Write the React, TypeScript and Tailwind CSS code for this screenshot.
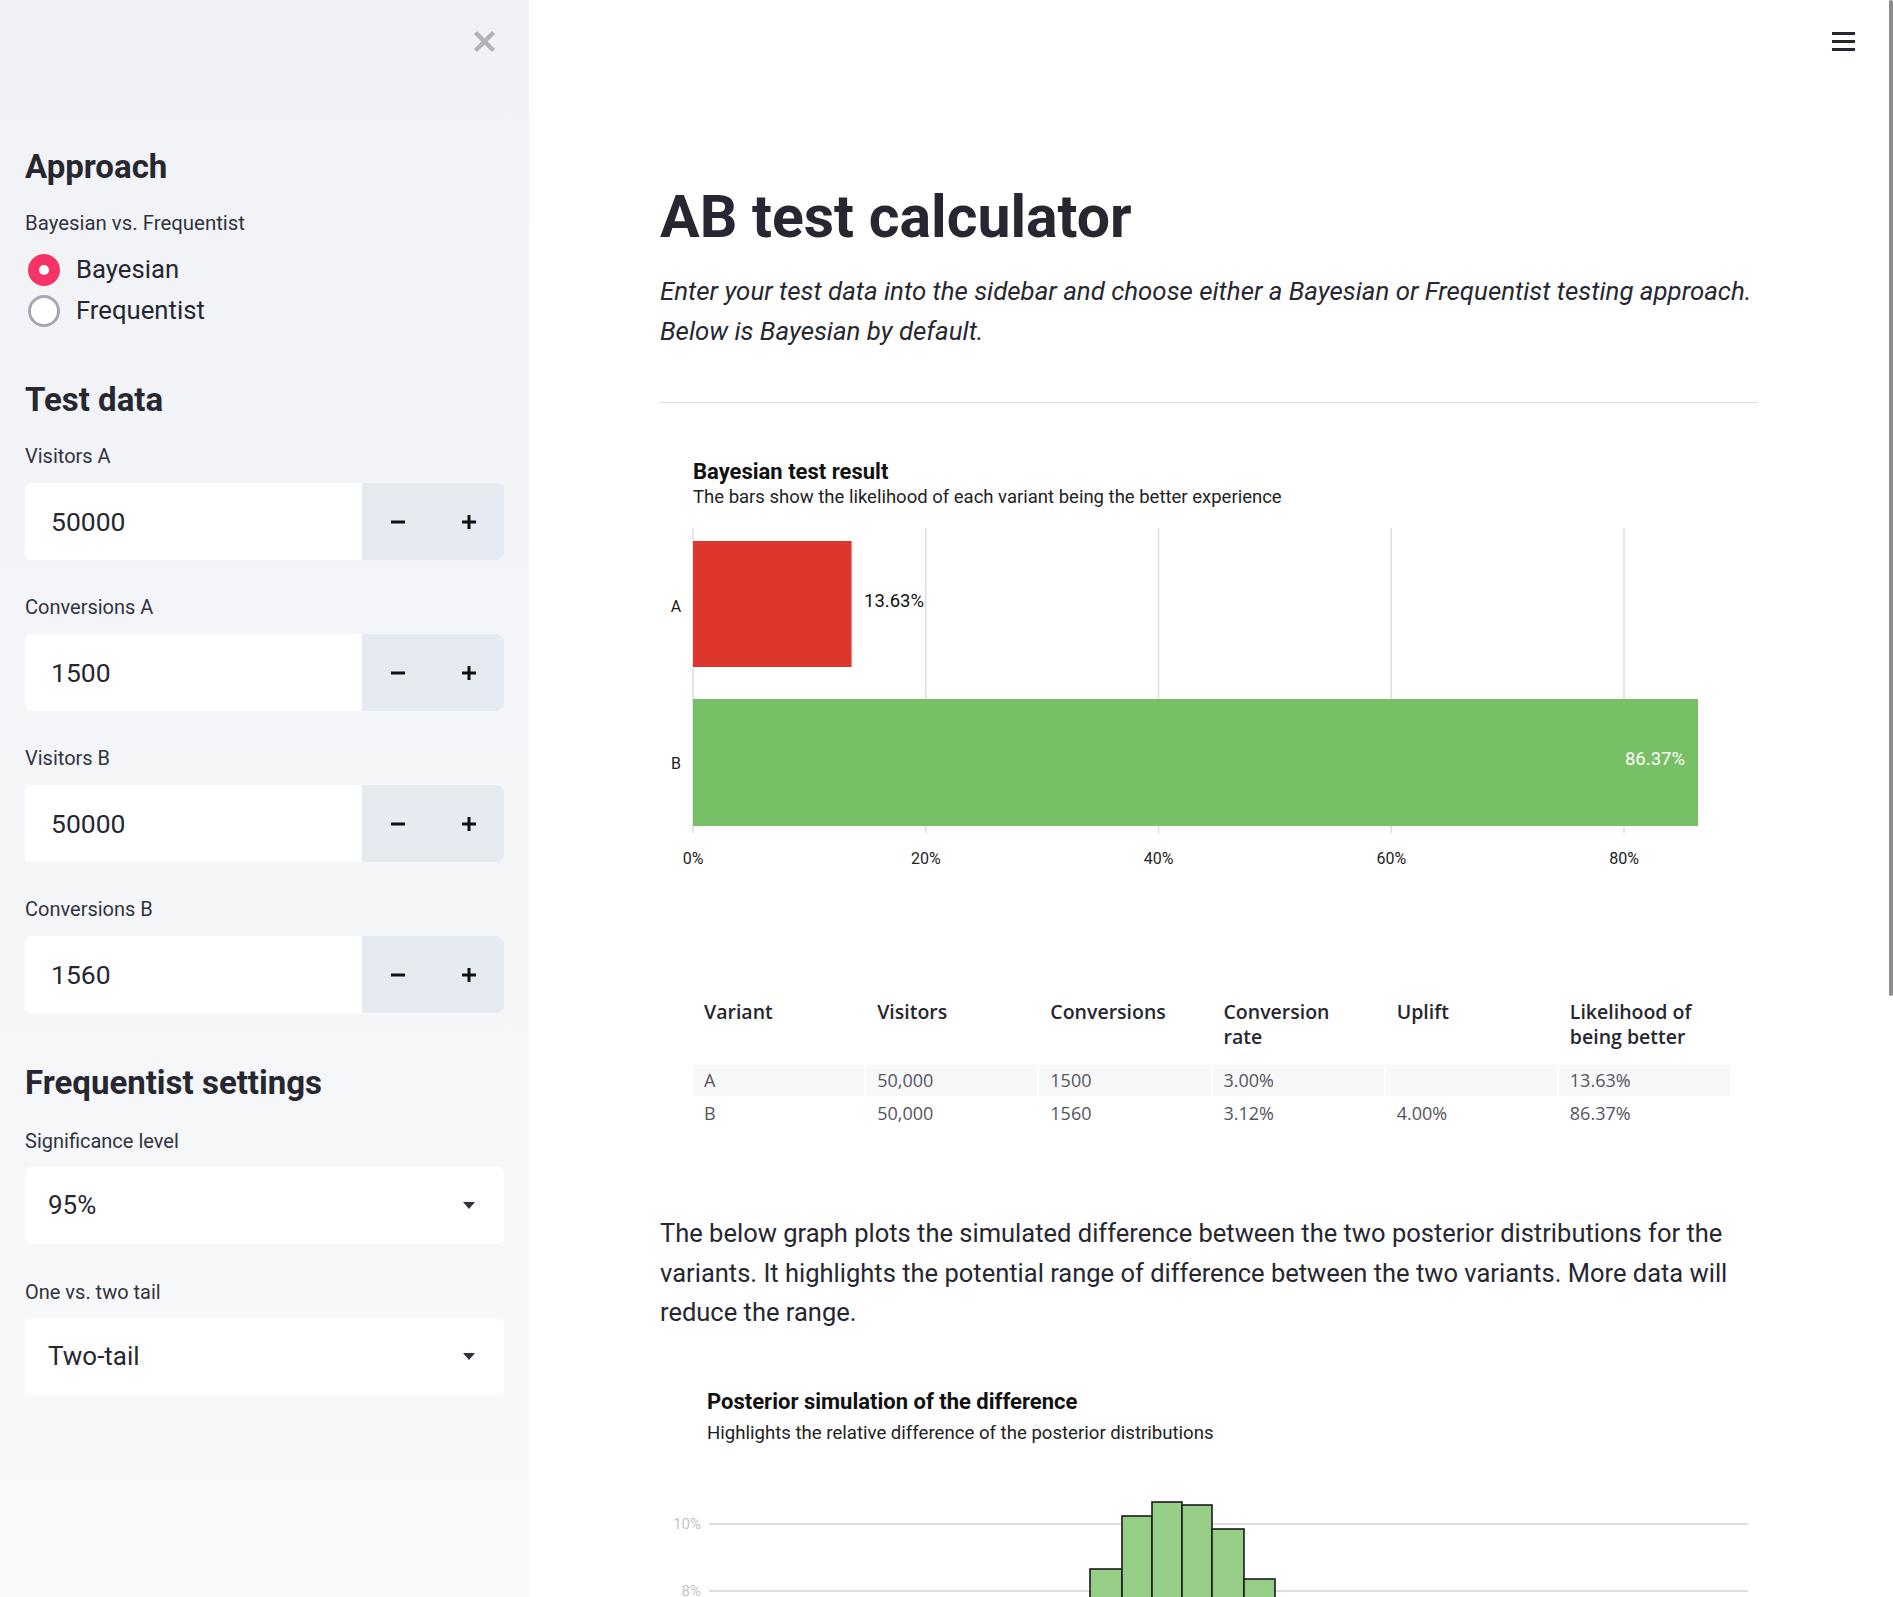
const inputs = [
  { label: 'Visitors A', value: '50000' },
  { label: 'Conversions A', value: '1500' },
  { label: 'Visitors B', value: '50000' },
  { label: 'Conversions B', value: '1560' },
];

const tableHead = ['Variant', 'Visitors', 'Conversions', 'Conversion rate', 'Uplift', 'Likelihood of being better'];
const tableRows = [
  ['A', '50,000', '1500', '3.00%', '', '13.63%'],
  ['B', '50,000', '1560', '3.12%', '4.00%', '86.37%'],
];

// histogram bins: left edge x, top y (svg coords)
const bins = [
  { x: 430, w: 32, top: 88 },
  { x: 462, w: 30, top: 35 },
  { x: 492, w: 30, top: 21 },
  { x: 522, w: 30, top: 24 },
  { x: 552, w: 32, top: 48 },
  { x: 584, w: 31, top: 98 },
];

function NumberInput({ label, value }: { label: string; value: string }) {
  return (
    <div className="mb-[33px]">
      <p className="text-[20px] leading-[28px] text-[#31333f]">{label}</p>
      <div className="mt-[13px] flex h-[77px] w-full">
        <div className="flex flex-1 items-center rounded-l-[6px] bg-white pl-[26px] text-[26.5px] text-[#262730]">
          {value}
        </div>
        <div className="flex w-[142px] rounded-r-[8px] bg-[#e6eaf1]">
          <button className="flex flex-1 items-center justify-center">
            <svg width="14" height="14" viewBox="0 0 14 14">
              <rect x="0" y="5.5" width="14" height="3" fill="#111" />
            </svg>
          </button>
          <button className="flex flex-1 items-center justify-center">
            <svg width="14" height="14" viewBox="0 0 14 14">
              <rect x="0" y="5.5" width="14" height="3" fill="#111" />
              <rect x="5.5" y="0" width="3" height="14" fill="#111" />
            </svg>
          </button>
        </div>
      </div>
    </div>
  );
}

function SelectBox({ label, value }: { label: string; value: string }) {
  return (
    <div className="mb-[34px]">
      <p className="text-[20px] leading-[28px] text-[#31333f]">{label}</p>
      <div className="mt-[12px] flex h-[77px] w-full items-center justify-between rounded-[6px] bg-white pl-[23px] pr-[29px] text-[26px] text-[#262730]">
        <span>{value}</span>
        <svg width="12" height="7" viewBox="0 0 12 7">
          <path d="M0 0 L12 0 L6 7 Z" fill="#31333f" />
        </svg>
      </div>
    </div>
  );
}

function Sidebar() {
  return (
    <aside className="h-full w-[529px] shrink-0 bg-gradient-to-b from-[#f0f2f6] to-[#f8f9fa] px-[25px] font-['Roboto',sans-serif]">
      <div className="flex h-[82px] items-center justify-end pr-[8px]">
        <svg width="23" height="23" viewBox="0 0 23 23">
          <path d="M2.5 2.5 L20.5 20.5 M20.5 2.5 L2.5 20.5" stroke="#b0b3b9" strokeWidth="4.5" />
        </svg>
      </div>

      <h2 className="mt-[65px] text-[33px] font-bold leading-[40px] text-[#262730]">Approach</h2>
      <p className="mt-[22px] text-[20.4px] leading-[28px] text-[#31333f]">Bayesian vs. Frequentist</p>
      <div className="mt-[12px] flex flex-col pl-[3px]">
        <div className="flex h-[41px] items-center">
          <span className="flex h-[32px] w-[32px] items-center justify-center rounded-full bg-[#f63366]">
            <span className="h-[10px] w-[10px] rounded-full bg-white" />
          </span>
          <span className="ml-[16px] text-[25.7px] text-[#262730]">Bayesian</span>
        </div>
        <div className="flex h-[41px] items-center">
          <span className="h-[32px] w-[32px] rounded-full border-[3px] border-[#a3a8b4] bg-white" />
          <span className="ml-[16px] text-[25.7px] text-[#262730]">Frequentist</span>
        </div>
      </div>

      <h2 className="mt-[49px] text-[33px] font-bold leading-[40px] text-[#262730]">Test data</h2>
      <div className="mt-[22px]">
        {inputs.map((i) => (
          <NumberInput key={i.label} label={i.label} value={i.value} />
        ))}
      </div>

      <h2 className="mt-[50px] text-[33px] font-bold leading-[40px] text-[#262730]">Frequentist settings</h2>
      <div className="mt-[24px]">
        <SelectBox label="Significance level" value="95%" />
        <SelectBox label="One vs. two tail" value="Two-tail" />
      </div>
    </aside>
  );
}

function BarChart() {
  const x0 = 33;
  const step = 232.75;
  return (
    <div className="ml-[33px] mt-[56px]">
      <p className="text-[22px] font-bold leading-[26px] text-[#111]">Bayesian test result</p>
      <p className="mt-[1px] text-[18.5px] leading-[22px] text-[#222]">
        The bars show the likelihood of each variant being the better experience
      </p>
      <svg width="1098" height="345" className="-ml-[33px] mt-[20px] block font-['Roboto',sans-serif]">
        {[0, 1, 2, 3, 4].map((k) => (
          <line key={k} x1={x0 + k * step} x2={x0 + k * step} y1={0} y2={305} stroke="#dddddd" strokeWidth={1.5} />
        ))}
        <rect x={x0} y={13} width={158.6} height={126} fill="#dc362d" />
        <rect x={x0} y={171} width={1005} height={127} fill="#77c066" />
        <text x={16} y={84} fontSize={16} textAnchor="middle" fill="#222">A</text>
        <text x={16} y={241} fontSize={16} textAnchor="middle" fill="#222">B</text>
        <text x={204} y={79} fontSize={18.5} fill="#111">13.63%</text>
        <text x={1025} y={237} fontSize={18.5} textAnchor="end" fill="#ffffff">86.37%</text>
        {['0%', '20%', '40%', '60%', '80%'].map((t, k) => (
          <text key={t} x={x0 + k * step} y={336} fontSize={16} textAnchor="middle" fill="#222">
            {t}
          </text>
        ))}
      </svg>
    </div>
  );
}

function ResultTable() {
  return (
    <div className="ml-[33px] mt-[126px] w-[1037px] font-['Open_Sans',sans-serif]">
      <div className="grid grid-cols-6 gap-x-[2px]">
        {tableHead.map((h) => (
          <div key={h} className="h-[64px] pl-[11px] pr-[20px] text-[19.5px] font-semibold leading-[25px] text-[#262730]">
            {h}
          </div>
        ))}
      </div>
      {tableRows.map((row, r) => (
        <div key={r} className="mt-[2px] grid grid-cols-6 gap-x-[2px]">
          {row.map((c, i) => (
            <div
              key={i}
              className={`flex h-[31px] items-center pl-[11px] text-[18px] text-[#52555f] ${r === 0 ? 'bg-[#f8f8f9]' : ''}`}
            >
              {c}
            </div>
          ))}
        </div>
      ))}
    </div>
  );
}

function Histogram() {
  return (
    <div className="ml-[47px] mt-[56px]">
      <p className="text-[22px] font-bold leading-[26px] text-[#111]">Posterior simulation of the difference</p>
      <p className="mt-[7px] text-[18.6px] leading-[22px] text-[#222]">
        Highlights the relative difference of the posterior distributions
      </p>
      <svg width="1098" height="200" className="-ml-[47px] mt-[37px] block font-['Roboto',sans-serif]">
        <line x1={49} x2={1088} y1={43} y2={43} stroke="#dddddd" strokeWidth={2} />
        <line x1={49} x2={1088} y1={110} y2={110} stroke="#dddddd" strokeWidth={2} />
        <text x={41} y={48} fontSize={15} textAnchor="end" fill="#c4c4c4">10%</text>
        <text x={41} y={115} fontSize={15} textAnchor="end" fill="#c4c4c4">8%</text>
        {bins.map((b) => (
          <rect key={b.x} x={b.x} y={b.top} width={b.w} height={200 - b.top + 5} fill="#96cd87" stroke="#1b1b1b" strokeWidth={1.6} />
        ))}
      </svg>
    </div>
  );
}

export default function App() {
  return (
    <div className="flex h-[1597px] w-full overflow-hidden bg-white font-['Roboto',sans-serif]">
      <Sidebar />
      <main className="relative h-full flex-1 bg-white">
        <div className="flex h-[82px] items-center justify-end pr-[38px]">
          <div className="flex w-[23px] flex-col gap-[5px]">
            <span className="h-[3px] w-full bg-[#262730]" />
            <span className="h-[3px] w-full bg-[#262730]" />
            <span className="h-[3px] w-full bg-[#262730]" />
          </div>
        </div>

        <div className="ml-[131px] w-[1098px]">
          <h1 className="mt-[100px] text-[59px] font-bold leading-[70px] text-[#262730]">AB test calculator</h1>
          <p className="mt-[19px] text-[25.85px] italic leading-[40px] text-[#262730]">
            Enter your test data into the sidebar and choose either a Bayesian or Frequentist testing approach. Below is
            Bayesian by default.
          </p>
          <hr className="mt-[51px] border-0 border-t border-[#dcdcdc]" />

          <BarChart />
          <ResultTable />

          <p className="mt-[85px] text-[25.5px] leading-[39.5px] text-[#262730]">
            The below graph plots the simulated difference between the two posterior distributions for the variants. It
            highlights the potential range of difference between the two variants. More data will reduce the range.
          </p>

          <Histogram />
        </div>

        <div className="absolute right-0 top-0 h-[996px] w-[4px] rounded-[2px] bg-[#8c8c8c]" />
      </main>
    </div>
  );
}
